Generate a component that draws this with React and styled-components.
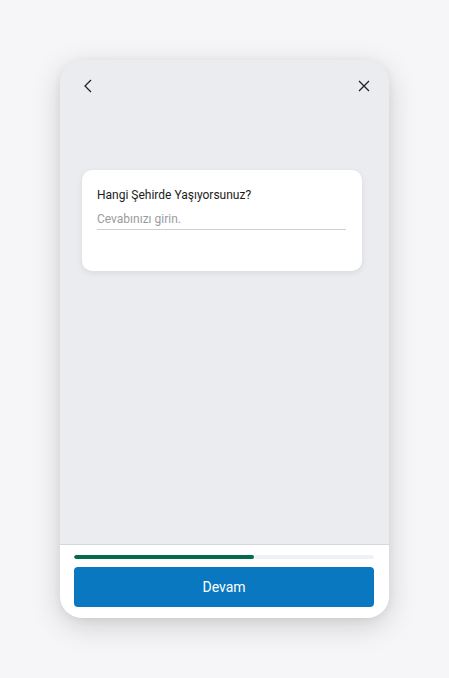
import React from 'react';
import styled, { createGlobalStyle } from 'styled-components';

const GlobalStyle = createGlobalStyle`
  html, body {
    margin: 0;
    padding: 0;
    background: #f6f6f8;
    font-family: Roboto, "Liberation Sans", sans-serif;
  }
`;

export default function App() {
  return (
    <Page>
      <GlobalStyle />
      <Frame>
        <Header>
          <IconButton aria-label="Geri">
            <svg width="14" height="14" viewBox="0 0 14 14" fill="none">
              <path d="M10 1 L4 7 L10 13" stroke="#222" strokeWidth="1.3" />
            </svg>
          </IconButton>
          <IconButton aria-label="Kapat">
            <svg width="14" height="14" viewBox="0 0 14 14" fill="none">
              <path d="M2 2 L12 12 M12 2 L2 12" stroke="#222" strokeWidth="1.3" />
            </svg>
          </IconButton>
        </Header>
        <Content>
          <QuestionCard>
            <Question>Hangi Şehirde Yaşıyorsunuz?</Question>
            <AnswerInput placeholder="Cevabınızı girin." />
          </QuestionCard>
        </Content>
        <Footer>
          <Progress>
            <ProgressFill style={{ width: '60%' }} />
          </Progress>
          <ContinueButton>Devam</ContinueButton>
        </Footer>
      </Frame>
    </Page>
  );
}

const Page = styled.div`
  display: flex;
  justify-content: center;
  padding: 60px 0 60px;
`;

const Frame = styled.div`
  width: 329px;
  height: 558px;
  display: flex;
  flex-direction: column;
  background: #ebecf0;
  border-radius: 22px;
  overflow: hidden;
  box-shadow: 0 8px 30px rgba(0, 0, 0, 0.16), 0 2px 8px rgba(0, 0, 0, 0.06);
`;

const Header = styled.div`
  height: 52px;
  display: flex;
  align-items: center;
  justify-content: space-between;
  padding: 0 18px 0 21px;
`;

const IconButton = styled.button`
  border: 0;
  background: none;
  padding: 0;
  width: 14px;
  height: 14px;
  display: flex;
  cursor: pointer;
`;

const Content = styled.div`
  flex: 1;
  padding: 58px 0 0 22px;
`;

const QuestionCard = styled.div`
  width: 280px;
  height: 101px;
  box-sizing: border-box;
  background: #fff;
  border-radius: 10px;
  padding: 17px 16px 0 15px;
  box-shadow: 0 2px 6px rgba(0, 0, 0, 0.08);
`;

const Question = styled.div`
  font-size: 12px;
  line-height: 16px;
  color: #1c1c1c;
`;

const AnswerInput = styled.input`
  display: block;
  width: 100%;
  box-sizing: border-box;
  margin-top: 6px;
  border: 0;
  border-bottom: 1px solid #cfd0d4;
  background: transparent;
  padding: 2px 0 2px;
  font-family: inherit;
  font-size: 12px;
  line-height: 16px;
  outline: none;
  &::placeholder {
    color: #9a9ba0;
  }
`;

const Footer = styled.div`
  background: #fff;
  border-top: 1px solid #d6d7dc;
  padding: 10px 15px 11px 14px;
  display: flex;
  flex-direction: column;
  gap: 8px;
`;

const Progress = styled.div`
  height: 4px;
  border-radius: 2px;
  background: #eef1f5;
  overflow: hidden;
`;

const ProgressFill = styled.div`
  height: 100%;
  background: #046a4b;
  border-radius: 2px;
`;

const ContinueButton = styled.button`
  height: 40px;
  border: 0;
  border-radius: 4px;
  background: #0a78c0;
  color: #fff;
  font-family: inherit;
  font-size: 14px;
  cursor: pointer;
`;
